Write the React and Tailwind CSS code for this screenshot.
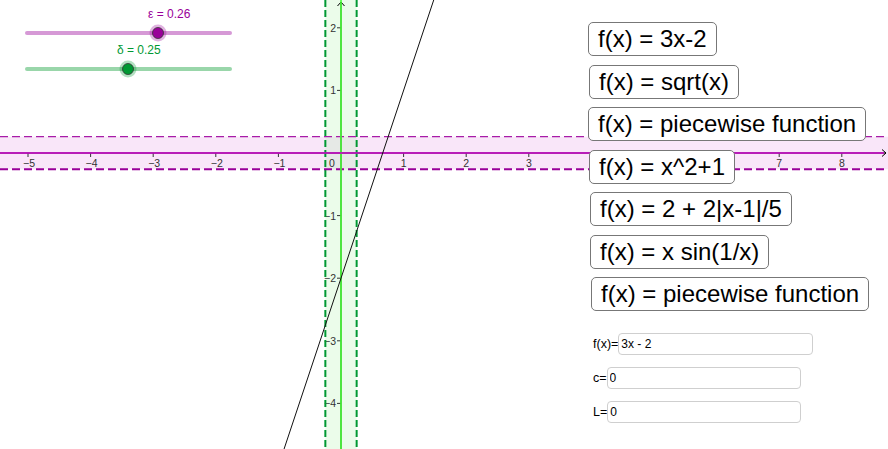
import React from "react";

// graph origin and scale (px per unit)
const OX = 341;
const OY = 153;
const U = 62.6;
const EPS = 0.26;
const DEL = 0.25;

const buttons = [
  { label: "f(x) = 3x-2", ml: "ml-0" },
  { label: "f(x) = sqrt(x)", ml: "ml-[1px]" },
  { label: "f(x) = piecewise function", ml: "ml-0" },
  { label: "f(x) = x^2+1", ml: "ml-[1px]" },
  { label: "f(x) = 2 + 2|x-1|/5", ml: "ml-[2px]" },
  { label: "f(x) = x sin(1/x)", ml: "ml-[2px]" },
  { label: "f(x) = piecewise function", ml: "ml-[3px]" },
];

const fields = [
  { label: "f(x)=", value: "3x - 2", w: "w-[195px]" },
  { label: "c=", value: "0", w: "w-[194px]" },
  { label: "L=", value: "0", w: "w-[194px]" },
];

const font = "Liberation Sans, Arial, sans-serif";

function Graph() {
  const bandTop = OY - EPS * U;
  const bandBot = OY + EPS * U;
  const gl = OX - DEL * U;
  const gr = OX + DEL * U;
  // 4, 5, 6 sit under the x^2+1 button
  const xs = [-5, -4, -3, -2, -1, 1, 2, 3, 7, 8];
  const ticks = [-5, -4, -3, -2, -1, 1, 2, 3, 4, 5, 6, 7, 8];
  const ys = [2, 1, -1, -2, -3, -4];
  const lineX = (py) => OX + (OY - py + 2 * U) / 3;

  return (
    <svg className="absolute inset-0" width="888" height="449" viewBox="0 0 888 449">
      <rect x="0" y="0" width="888" height="449" fill="#ffffff" />
      {/* delta band */}
      <rect x={gl} y="0" width={gr - gl} height="449" fill="#ebfcea" />
      {/* epsilon band */}
      <rect x="0" y={bandTop} width="888" height={bandBot - bandTop} fill="#f9e6f9" />
      <rect x={gl} y={bandTop} width={gr - gl} height={bandBot - bandTop} fill="#e6e9e6" />

      {/* axes */}
      <line x1="0" y1={OY} x2="886" y2={OY} stroke="#000" strokeWidth="1" />
      <polyline points="882,149.5 886,153 882,156.5" fill="none" stroke="#000" strokeWidth="1" />
      <line x1={OX} y1="2" x2={OX} y2="449" stroke="#000" strokeWidth="1" />
      <polyline points="337.5,6 341,2 344.5,6" fill="none" stroke="#000" strokeWidth="1" />

      {ticks.map((i) => (
        <line key={"t" + i} x1={OX + i * U} y1={OY} x2={OX + i * U} y2={OY + 4} stroke="#333" strokeWidth="1" />
      ))}
      {xs.map((i) => (
        <text
          key={"x" + i}
          x={OX + i * U + (i < 0 ? 1 : 0)}
          y="167"
          fontSize="10.5"
          textAnchor="middle"
          fill="#333"
          fontFamily={font}
        >
          {i < 0 ? "\u2212" + -i : i}
        </text>
      ))}
      <text x="332" y="167" fontSize="10.5" textAnchor="middle" fill="#333" fontFamily={font}>
        0
      </text>
      {ys.map((j) => (
        <g key={"y" + j}>
          <line x1={OX - 4} y1={OY - j * U} x2={OX} y2={OY - j * U} stroke="#333" strokeWidth="1" />
          <text x="336" y={OY - j * U + 4} fontSize="10.5" textAnchor="end" fill="#333" fontFamily={font}>
            {j < 0 ? "\u2212" + -j : j}
          </text>
        </g>
      ))}

      {/* dashed bounds */}
      <line x1={gl} y1="0" x2={gl} y2="449" stroke="#009933" strokeWidth="2" strokeDasharray="7 3" />
      <line x1={gr} y1="0" x2={gr} y2="449" stroke="#009933" strokeWidth="2" strokeDasharray="7 3" />
      <line x1="0" y1={bandTop} x2="888" y2={bandTop} stroke="#a81ca8" strokeWidth="1.2" strokeDasharray="8 4" />
      <line x1="0" y1={bandBot} x2="888" y2={bandBot} stroke="#990099" strokeWidth="2" strokeDasharray="8 4" />

      {/* x = c and y = L */}
      <line x1={OX} y1="0" x2={OX} y2="449" stroke="#44ff33" strokeWidth="1.6" />
      <line x1="0" y1={OY} x2="884" y2={OY} stroke="#cc00cc" strokeWidth="1.6" />

      {/* f(x) = 3x - 2 */}
      <line x1={lineX(0)} y1="0" x2={lineX(449)} y2="449" stroke="#111" strokeWidth="1" />

      {/* sliders */}
      <line x1="27" y1="33" x2="230" y2="33" stroke="#d699d6" strokeWidth="4" strokeLinecap="round" />
      <circle cx="158" cy="33" r="8.5" fill="#990099" opacity="0.3" />
      <circle cx="158" cy="33" r="5.5" fill="#990099" stroke="#333" strokeWidth="0.8" />
      <text x="148" y="17.5" fontSize="12" fill="#990099" fontFamily={font}>
        ε = 0.26
      </text>

      <line x1="27" y1="69" x2="230" y2="69" stroke="#99d6aa" strokeWidth="4" strokeLinecap="round" />
      <circle cx="128" cy="69" r="8.5" fill="#009933" opacity="0.3" />
      <circle cx="128" cy="69" r="5.5" fill="#009933" stroke="#333" strokeWidth="0.8" />
      <text x="117" y="53.5" fontSize="12" fill="#009933" fontFamily={font}>
        δ = 0.25
      </text>
    </svg>
  );
}

export default function App() {
  return (
    <div className="relative w-[888px] h-[449px] overflow-hidden bg-white font-['Liberation_Sans',Arial,sans-serif]">
      <Graph />

      <div className="absolute left-[588px] top-[22px] flex flex-col items-start">
        <div className="flex flex-col items-start gap-[8.5px]">
          {buttons.map((b, i) => (
            <button
              key={i}
              className={`${b.ml} h-[34px] px-[9px] flex items-center bg-white border-[1.5px] border-[#777] rounded-[5px] text-[24px] leading-none text-black whitespace-nowrap`}
            >
              {b.label}
            </button>
          ))}
        </div>

        <div className="mt-[22px] flex flex-col gap-[12px] pl-[5px]">
          {fields.map((f, i) => (
            <div key={i} className="flex items-center h-[22px]">
              <span className="text-[12.5px] text-black leading-none">{f.label}</span>
              <input
                readOnly
                value={f.value}
                className={`${f.w} h-[22px] border border-[#cfcfcf] rounded-[4px] bg-white px-[2px] text-[12px] text-black outline-none`}
              />
            </div>
          ))}
        </div>
      </div>
    </div>
  );
}
